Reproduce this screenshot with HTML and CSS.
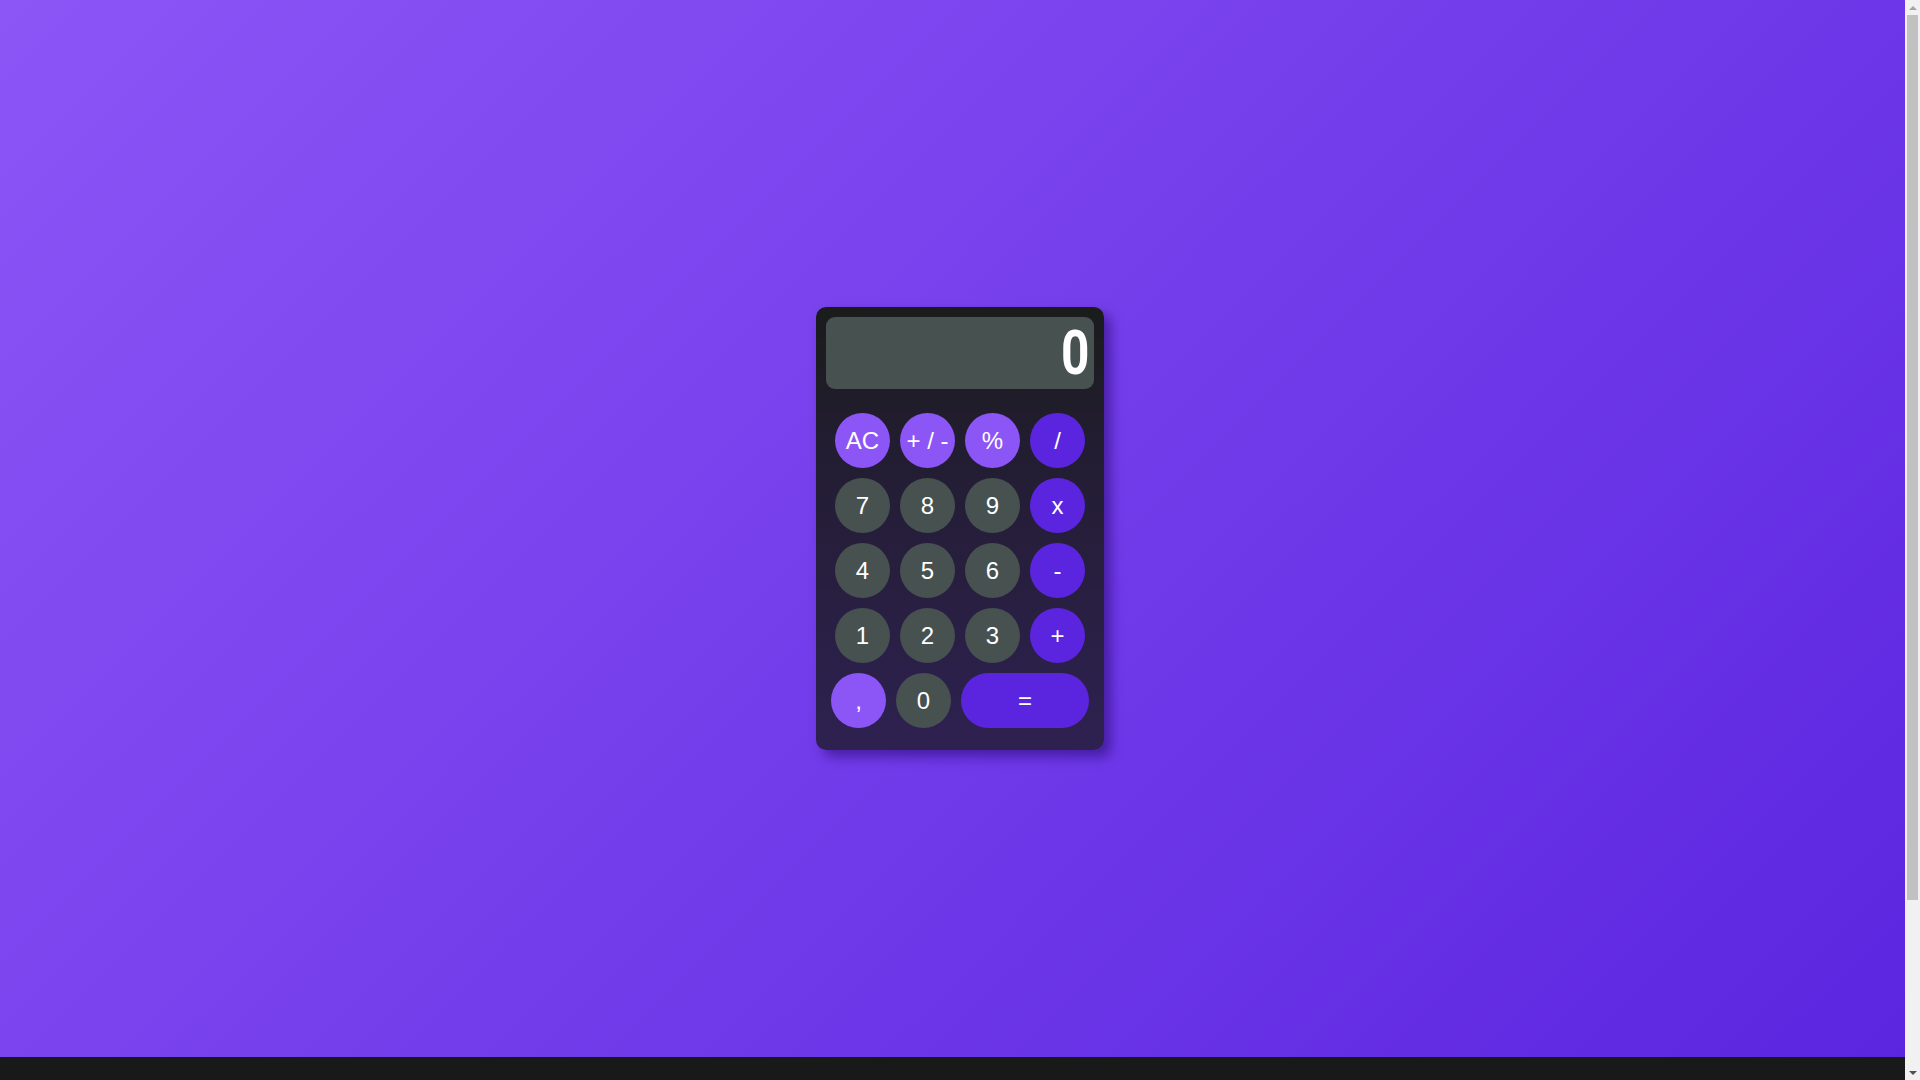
FILE: index.html
```html
<!DOCTYPE html>
<html lang="en">
<head>
<meta charset="utf-8">
<title>Calculator</title>
<link rel="stylesheet" href="styles.css">
</head>
<body>
<div class="page">
  <main class="stage">
    <div class="calc">
      <div class="display"><span class="value">0</span></div>
      <div class="keys">
        <div class="row">
          <button class="key light">AC</button>
          <button class="key light">+ / -</button>
          <button class="key light">%</button>
          <button class="key op">/</button>
        </div>
        <div class="row">
          <button class="key num">7</button>
          <button class="key num">8</button>
          <button class="key num">9</button>
          <button class="key op">x</button>
        </div>
        <div class="row">
          <button class="key num">4</button>
          <button class="key num">5</button>
          <button class="key num">6</button>
          <button class="key op">-</button>
        </div>
        <div class="row">
          <button class="key num">1</button>
          <button class="key num">2</button>
          <button class="key num">3</button>
          <button class="key op">+</button>
        </div>
        <div class="row">
          <button class="key light">,</button>
          <button class="key num">0</button>
          <button class="key op wide">=</button>
        </div>
      </div>
    </div>
  </main>
  <div class="filler"></div>
</div>
<div class="scrollbar" aria-hidden="true">
  <div class="sb-arrow up"></div>
  <div class="sb-track"><div class="sb-thumb"></div></div>
  <div class="sb-arrow down"></div>
</div>
</body>
</html>
```
FILE: styles.css
```css
html, body {
  margin: 0;
  height: 100%;
  overflow: hidden;
  background: #171a19;
}
body {
  display: flex;
  font-family: "Liberation Sans", Arial, sans-serif;
}
.page {
  flex: 1;
  min-width: 0;
  height: 100vh;
  overflow: hidden;
}
.stage {
  width: 100vw;
  height: 1057px;
  background: linear-gradient(135deg, #8c55f6 0%, #5b25e0 100%);
  display: flex;
  align-items: center;
  justify-content: center;
}
.filler {
  height: 224px;
  background: #171a19;
}
.calc {
  width: 288px;
  box-sizing: border-box;
  padding: 10px 10px 22px;
  border-radius: 10px;
  background: linear-gradient(180deg, #1a1c1c 0%, #231d33 35%, #2e2151 100%);
  box-shadow: 7px 7px 12px rgba(40, 10, 110, 0.55);
}
.display {
  height: 72px;
  border-radius: 9px;
  background: #465150;
  color: #fff;
  font-family: Roboto, "Liberation Sans", sans-serif;
  font-weight: 700;
  font-size: 62px;
  line-height: 72px;
  text-align: right;
  padding-right: 4px;
  margin-bottom: 24px;
}
.value {
  display: inline-block;
  transform: scaleX(0.8);
  transform-origin: right center;
}
.keys {
  display: flex;
  flex-direction: column;
  gap: 10px;
}
.row {
  display: flex;
  justify-content: center;
  gap: 10px;
}
.key {
  width: 55px;
  height: 55px;
  border: none;
  border-radius: 28px;
  padding: 0;
  color: #fff;
  font-family: "Liberation Sans", Arial, sans-serif;
  font-size: 24px;
  line-height: 55px;
  text-align: center;
}
.light { background: #8c55f6; }
.op { background: #5b25e0; }
.num { background: #465150; }
.wide { width: 128px; }

.scrollbar {
  width: 15px;
  flex: none;
  height: 100vh;
  background: #f1f1f1;
  display: flex;
  flex-direction: column;
}
.sb-arrow {
  height: 15px;
  flex: none;
  display: flex;
  align-items: center;
  justify-content: center;
}
.sb-arrow::before {
  content: "";
  width: 0;
  height: 0;
  border-left: 4px solid transparent;
  border-right: 4px solid transparent;
}
.sb-arrow.up::before { border-bottom: 4px solid #a3a3a3; }
.sb-arrow.down::before { border-top: 4px solid #505050; }
.sb-track {
  flex: 1;
  padding: 0 2px;
}
.sb-thumb {
  height: 885px;
  background: #c1c1c1;
}
```
